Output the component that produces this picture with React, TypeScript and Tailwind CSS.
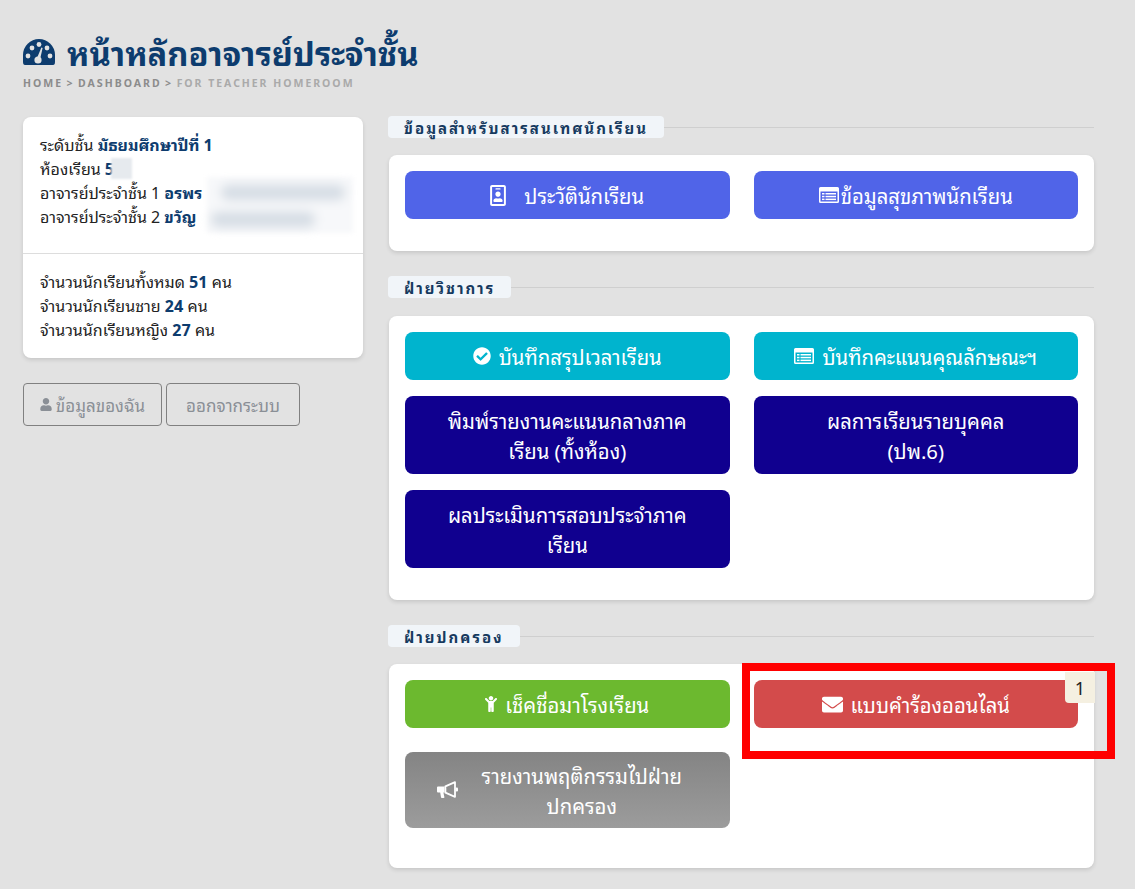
import React from 'react';
import { FaUser, FaRegIdBadge, FaCheckCircle, FaChild, FaEnvelope } from 'react-icons/fa';

const FONT = '"Noto Sans Thai Looped", "Noto Sans Thai", "Noto Sans", "Open Sans", "Liberation Sans", sans-serif';

// the old font-awesome glyphs in the picture are not in the icon packages, so draw them
const GaugeIcon = () => (
  <svg viewBox="0 0 32 27" className="h-[27px] w-8 shrink-0">
    <path d="M2 27 Q0 27 0 24 V17 A16 16 0 0 1 32 17 V24 Q32 27 30 27 Z" fill="#0d3c6e" />
    <g fill="#e2e2e2">
      <circle cx="5" cy="18" r="2.4" />
      <circle cx="9" cy="10" r="2.4" />
      <circle cx="16" cy="6.5" r="2.4" />
      <circle cx="24" cy="10" r="2.4" />
      <circle cx="27" cy="18" r="2.4" />
      <circle cx="15" cy="22" r="3.6" />
      <path d="M13.6 21 L18.4 9.5 L19.6 10 L16.8 22.6 Z" />
    </g>
  </svg>
);

const ListCardIcon: React.FC<{ className?: string }> = ({ className }) => (
  <svg viewBox="0 0 20 16" className={className} fill="currentColor">
    <path
      fillRule="evenodd"
      d="M1.5 0 H18.5 Q20 0 20 1.5 V14.5 Q20 16 18.5 16 H1.5 Q0 16 0 14.5 V1.5 Q0 0 1.5 0 Z M1.5 4.5 V14.5 H18.5 V4.5 Z"
    />
    <rect x="3" y="6" width="2.5" height="1.5" />
    <rect x="6.5" y="6" width="10.5" height="1.5" />
    <rect x="3" y="8.8" width="2.5" height="1.5" />
    <rect x="6.5" y="8.8" width="10.5" height="1.5" />
    <rect x="3" y="11.6" width="2.5" height="1.5" />
    <rect x="6.5" y="11.6" width="10.5" height="1.5" />
  </svg>
);

const MegaphoneIcon = () => (
  <svg viewBox="0 0 21 18" className="h-[18px] w-[21px] shrink-0" fill="currentColor">
    <path d="M1 5.5 H7.5 V11.5 H6.4 L7.4 16.2 Q7.5 17 6.6 17 H4.8 Q4.1 17 4 16.3 L3.2 11.5 H1 Q0 11.5 0 10.5 V6.5 Q0 5.5 1 5.5 Z" />
    <path d="M8.4 5.3 L18 1.2 V15.8 L8.4 11.7 Z" fill="none" stroke="currentColor" strokeWidth="1.8" strokeLinejoin="round" />
    <rect x="18.6" y="6.5" width="2.4" height="4" rx="1" />
  </svg>
);

interface MenuButtonProps {
  icon?: React.ReactNode;
  color: string;
  tall?: boolean;
  children: React.ReactNode;
}

const MenuButton: React.FC<MenuButtonProps> = ({ icon, color, tall, children }) => (
  <a className={`flex items-center justify-center gap-2 rounded-lg px-8 text-center text-[20.3px] leading-[30px] text-white ${color} ${tall ? 'py-[9px]' : 'h-12'}`}>
    {icon}
    <span>{children}</span>
  </a>
);

const SectionTitle: React.FC<{ children: React.ReactNode }> = ({ children }) => (
  <div className="flex items-center">
    <span className="ml-[-1px] rounded bg-[#f1f5f9] px-4 text-[15px] font-bold leading-[22px] tracking-[2px] text-[#163a5f]">
      {children}
    </span>
    <span className="h-px flex-1 bg-[#cfcfcf]" />
  </div>
);

const Card: React.FC<{ children: React.ReactNode; className?: string }> = ({ children, className }) => (
  <div className={`rounded-lg bg-white shadow-[0_2px_4px_rgba(0,0,0,0.12)] ${className ?? ''}`}>{children}</div>
);

export default function App() {
  return (
    <div className="relative min-h-[889px] overflow-hidden bg-[#e2e2e2] pl-[23px] pr-[41px] pt-[31px]" style={{ fontFamily: FONT }}>
      <h1 className="flex items-center gap-3 text-[32.7px] font-bold leading-[40px] text-[#0d3c6e]">
        <GaugeIcon />
        หน้าหลักอาจารย์ประจำชั้น
      </h1>
      <div className="mt-[3px] flex items-center gap-[3.5px] text-[10.5px] font-bold leading-[18px] tracking-[2px] text-[#8c8c8c]">
        <span>HOME</span>
        <span>&gt;</span>
        <span>DASHBOARD</span>
        <span>&gt;</span>
        <span className="text-[#aaaaaa]">FOR TEACHER HOMEROOM</span>
      </div>

      <div className="mt-[25px] flex gap-[26px]">
        {/* left column */}
        <div className="w-[340px] shrink-0">
          <Card className="relative text-[16px] leading-6 text-[#222222]">
            <div className="px-[17px] pb-[25px] pt-[15px]">
              <div>ระดับชั้น <b className="text-[#0d3c6e]">มัธยมศึกษาปีที่ 1</b></div>
              <div>ห้องเรียน <b className="text-[#0d3c6e]">5</b></div>
              <div>อาจารย์ประจำชั้น 1 <b className="text-[#0d3c6e]">อรพร</b></div>
              <div>อาจารย์ประจำชั้น 2 <b className="text-[#0d3c6e]">ขวัญ</b></div>
            </div>
            <div className="border-t border-[#dddddd] px-[17px] pb-[17px] pt-[15px]">
              <div>จำนวนนักเรียนทั้งหมด <b className="text-[#0d3c6e]">51</b> คน</div>
              <div>จำนวนนักเรียนชาย <b className="text-[#0d3c6e]">24</b> คน</div>
              <div>จำนวนนักเรียนหญิง <b className="text-[#0d3c6e]">27</b> คน</div>
            </div>
            {/* blurred-out names */}
            <div className="absolute left-[88px] top-[41px] h-[21px] w-[21px] bg-[#e6eaee] blur-[1px]" />
            <div className="absolute left-[184px] top-[60px] h-[56px] w-[146px] bg-[#f7f8fa] blur-[2px]">
              <div className="absolute left-[14px] top-[8px] h-[15px] w-[124px] rounded-full bg-[#d5dce4] blur-[5px]" />
              <div className="absolute left-[4px] top-[35px] h-[15px] w-[104px] rounded-full bg-[#d5dce4] blur-[5px]" />
            </div>
          </Card>
          <div className="mt-[25px] flex gap-1">
            <a className="flex h-[43px] w-[139px] items-center justify-center gap-1 rounded border border-[#808080] text-[17px] text-[#8a8f96]">
              <FaUser className="h-[13px] w-3" />
              ข้อมูลของฉัน
            </a>
            <a className="flex h-[43px] w-[134px] items-center justify-center rounded border border-[#808080] text-[17px] text-[#8a8f96]">
              ออกจากระบบ
            </a>
          </div>
        </div>

        {/* right column */}
        <div className="min-w-0 flex-1">
          <div className="mt-[-1px]">
            <SectionTitle>ข้อมูลสำหรับสารสนเทศนักเรียน</SectionTitle>
          </div>
          <Card className="mt-[17px] grid grid-cols-2 gap-x-6 px-4 pb-8 pt-4">
            <MenuButton color="bg-[#5064e8]" icon={<FaRegIdBadge className="mr-[10px] h-[21px] w-4" />}>ประวัตินักเรียน</MenuButton>
            <MenuButton color="bg-[#5064e8]" icon={<ListCardIcon className="mr-[-6px] h-4 w-5" />}>ข้อมูลสุขภาพนักเรียน</MenuButton>
          </Card>

          <div className="mt-[25px]">
            <SectionTitle>ฝ่ายวิชาการ</SectionTitle>
          </div>
          <Card className="mt-[18px] grid grid-cols-2 gap-x-6 gap-y-4 px-4 pb-8 pt-4">
            <MenuButton color="bg-[#00b4ce]" icon={<FaCheckCircle className="h-[18px] w-[18px]" />}>บันทึกสรุปเวลาเรียน</MenuButton>
            <MenuButton color="bg-[#00b4ce]" icon={<ListCardIcon className="h-4 w-5" />}>บันทึกคะแนนคุณลักษณะฯ</MenuButton>
            <MenuButton color="bg-[#10008f]" tall>พิมพ์รายงานคะแนนกลางภาคเรียน (ทั้งห้อง)</MenuButton>
            <MenuButton color="bg-[#10008f]" tall>ผลการเรียนรายบุคคล<br />(ปพ.6)</MenuButton>
            <MenuButton color="bg-[#10008f]" tall>ผลประเมินการสอบประจำภาคเรียน</MenuButton>
          </Card>

          <div className="mt-[25px]">
            <SectionTitle>ฝ่ายปกครอง</SectionTitle>
          </div>
          <Card className="relative mt-[17px] grid grid-cols-2 gap-x-6 gap-y-6 px-4 pb-10 pt-4">
            <MenuButton color="bg-[#6cb92f]" icon={<FaChild className="h-[18px] w-3" />}>เช็คชื่อมาโรงเรียน</MenuButton>
            <div className="relative">
              <MenuButton color="bg-[#d34b4b]" icon={<FaEnvelope className="h-[21px] w-[21px]" />}>แบบคำร้องออนไลน์</MenuButton>
              <span className="absolute right-[-17px] top-[-8px] flex h-[31px] w-[30px] items-center justify-center rounded-bl bg-[#f5f0e1] text-[18px] text-[#222222]">1</span>
            </div>
            <a className="flex h-[76px] items-center rounded-lg bg-gradient-to-b from-[#848484] to-[#9c9c9c] pl-8 pr-6 text-center text-[20.3px] leading-[30px] text-white">
              <MegaphoneIcon />
              <span className="flex-1 px-4">รายงานพฤติกรรมไปฝ่ายปกครอง</span>
            </a>
          </Card>
        </div>
      </div>

      {/* red annotation box drawn over the screenshot */}
      <div className="absolute left-[742px] top-[663px] h-[96px] w-[373px] border-8 border-[#ff0000]" />
    </div>
  );
}
